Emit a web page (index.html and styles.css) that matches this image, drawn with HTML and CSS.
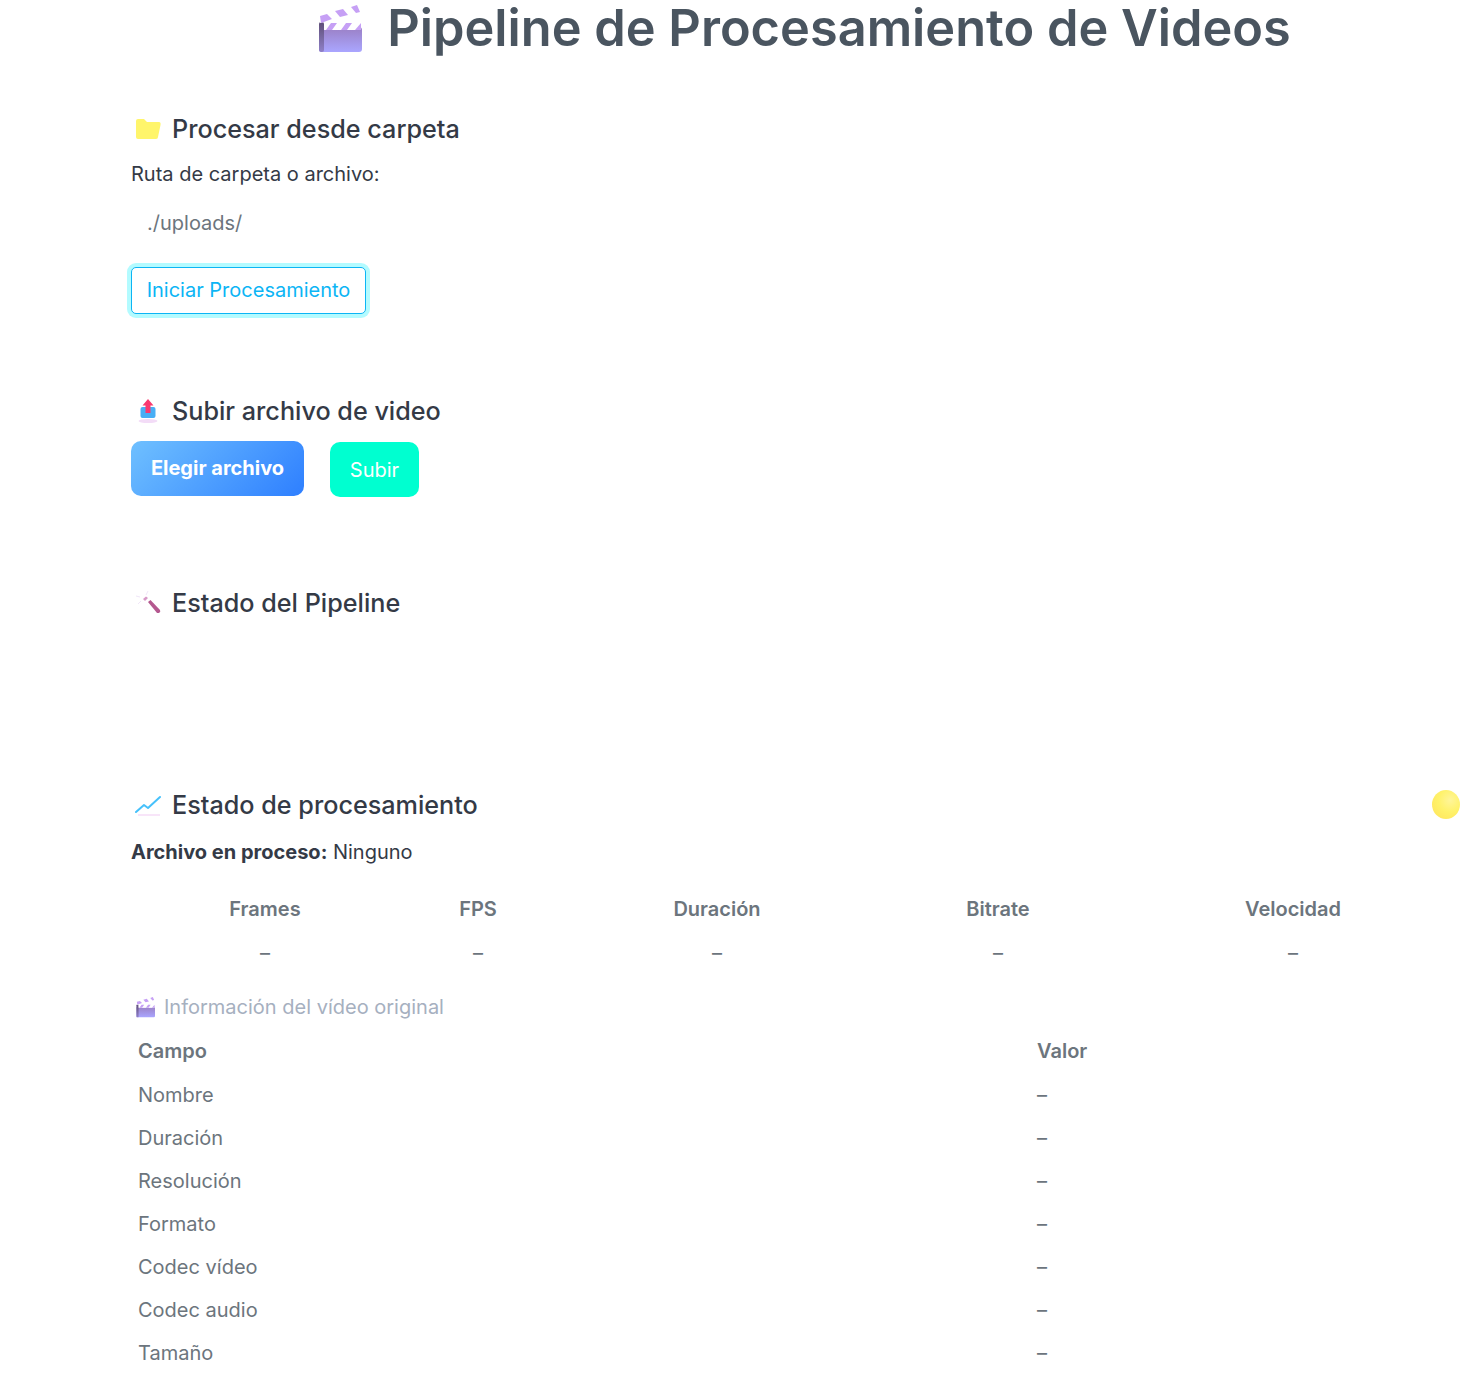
FILE: index.html
```html
<!DOCTYPE html>
<html>

<head>
    <title>Pipeline de Procesamiento de Videos</title>
    <link rel="stylesheet" href="styles.css">
</head>

<body>
    <svg class="defs">
        <defs>
            <linearGradient id="clapBody" x1="0" y1="0" x2="0" y2="1">
                <stop offset="0" stop-color="#9a7fc4" />
                <stop offset="1" stop-color="#aaa6ff" />
            </linearGradient>
            <linearGradient id="clapEdge" x1="0" y1="0" x2="0" y2="1">
                <stop offset="0" stop-color="#5f4f78" />
                <stop offset="1" stop-color="#8f80c8" />
            </linearGradient>
            <symbol id="clapper" viewBox="0 0 44 50">
                <rect x="1" y="24" width="43" height="25" rx="3" fill="url(#clapBody)" />
                <rect x="1" y="19" width="5" height="30" rx="2" fill="url(#clapEdge)" />
                <path d="M1 13 L39 2 L42 9 L2 20 Z" fill="#fff" />
                <path d="M2 13 L9 11 L14 16 L3 20 Z M17 8 L25 6 L30 12 L22 14 Z M33 4 L39 2 L42 9 L38 10 Z" fill="#c6a0f5" />
                <path d="M6 20 L43 20 L43 27 L6 27 Z" fill="#fff" />
                <path d="M13 20 L19 20 L14 27 L8 27 Z M28 20 L34 20 L29 27 L23 27 Z M43 20 L43 27 L37 27 Z" fill="#c6a0f5" />
            </symbol>
        </defs>
    </svg>

    <div class="page">
        <h1 class="title">
            <svg class="title-icon"><use href="#clapper" /></svg>
            <span class="title-text">Pipeline de Procesamiento de Videos</span>
        </h1>

        <section class="folder-section">
            <h2 class="heading">
                <svg class="heading-icon" viewBox="0 0 26 24">
                    <path d="M1 4 Q1 2 3 2 L9 2 L12 5 L24 5 Q26 5 25.500 8 L23 20 Q23 22 21 22 L3 22 Q1 22 1 20 Z" fill="#fff56b" />
                </svg>
                Procesar desde carpeta
            </h2>
            <p class="field-label">Ruta de carpeta o archivo:</p>
            <div class="path-input">./uploads/</div>
            <button class="start-btn">Iniciar Procesamiento</button>
        </section>

        <section class="upload-section">
            <h2 class="heading">
                <svg class="heading-icon" viewBox="0 0 26 24">
                    <ellipse cx="13" cy="22" rx="9.500" ry="2" fill="#f3dcf7" />
                    <rect x="5.500" y="8" width="15" height="11" rx="2" fill="#48aef5" />
                    <path d="M13 0 L18.500 6.500 L15.500 6.500 L15.500 14 L10.500 14 L10.500 6.500 L7.500 6.500 Z" fill="#f9396f" />
                </svg>
                Subir archivo de video
            </h2>
            <div class="upload-row">
                <button class="choose-btn">Elegir archivo</button>
                <button class="upload-btn">Subir</button>
            </div>
        </section>

        <section class="status-section">
            <h2 class="heading">
                <svg class="heading-icon" viewBox="0 0 26 24">
                    <path d="M13 11 L15.500 9 L25 19 Q26 21 24 22 L22 22 Z" fill="#b4588f" />
                    <path d="M8 8 L11 5.500 L13 7 L10 10 Z" fill="#d79ac8" />
                    <path d="M1 5 L5 6 M13 0 L11 4 M3 13 L6 10" stroke="#f0e6f8" stroke-width="1" />
                </svg>
                Estado del Pipeline
            </h2>
        </section>

        <section class="process-section">
            <h2 class="heading">
                <svg class="heading-icon" viewBox="0 0 26 24">
                    <path d="M3 22 L25 22" stroke="#f6dcf7" stroke-width="1.500" />
                    <path d="M1 19 L9 12 L13 15 L25 4" fill="none" stroke="#46c1fb" stroke-width="2" stroke-linecap="round" stroke-linejoin="round" />
                </svg>
                Estado de procesamiento
            </h2>
            <p class="current-file"><strong>Archivo en proceso:</strong> Ninguno</p>

            <table class="metrics">
                <tr>
                    <th class="col-frames">Frames</th>
                    <th class="col-fps">FPS</th>
                    <th class="col-duration">Duración</th>
                    <th class="col-bitrate">Bitrate</th>
                    <th class="col-speed">Velocidad</th>
                </tr>
                <tr>
                    <td>–</td>
                    <td>–</td>
                    <td>–</td>
                    <td>–</td>
                    <td>–</td>
                </tr>
            </table>

            <h3 class="info-heading">
                <svg class="info-icon"><use href="#clapper" /></svg>
                Información del vídeo original
            </h3>

            <table class="info">
                <tr>
                    <th class="col-field">Campo</th>
                    <th>Valor</th>
                </tr>
                <tr><td>Nombre</td><td>–</td></tr>
                <tr><td>Duración</td><td>–</td></tr>
                <tr><td>Resolución</td><td>–</td></tr>
                <tr><td>Formato</td><td>–</td></tr>
                <tr><td>Codec vídeo</td><td>–</td></tr>
                <tr><td>Codec audio</td><td>–</td></tr>
                <tr><td>Tamaño</td><td>–</td></tr>
            </table>
        </section>
    </div>

    <div class="ball"></div>
</body>

</html>
```

FILE: styles.css
```css
html,
body {
    margin: 0;
    padding: 0;
    background: #fff;
}

body {
    font-family: "Inter", "Liberation Sans", sans-serif;
    color: #343a46;
    overflow-x: hidden;
}

.defs {
    position: absolute;
    width: 0;
    height: 0;
}

.page {
    width: 1336px;
    margin-left: 131px;
}

.title {
    display: flex;
    justify-content: center;
    align-items: center;
    gap: 25px;
    height: 56px;
    margin: 0;
    font-size: 50.5px;
    line-height: 52px;
    font-weight: 600;
    color: #4a5560;
    padding-left: 11px;
}

.title-icon {
    width: 44px;
    height: 50px;
}

.heading {
    display: flex;
    align-items: center;
    gap: 11px;
    height: 32px;
    margin: 0;
    font-size: 25.2px;
    font-weight: 500;
    color: #343a46;
}

.heading-icon {
    width: 26px;
    height: 24px;
    margin-left: 4px;
}

.folder-section {
    padding-top: 57px;
}

.field-label {
    margin: 17px 0 0;
    font-size: 20px;
    line-height: 24px;
}

.path-input {
    margin-top: 25px;
    padding-left: 16px;
    font-size: 20px;
    line-height: 24px;
    color: #6c757d;
}

.start-btn {
    display: block;
    width: 235px;
    height: 47px;
    margin: 32px 0 0;
    padding: 0 0 2px;
    font-family: inherit;
    font-size: 20px;
    color: #0cb5f5;
    background: #fff;
    border: 1px solid #0cb5f5;
    border-radius: 5px;
    box-shadow: 0 0 0 4px #b3fbff;
}

.upload-section {
    padding-top: 81px;
}

.upload-row {
    display: flex;
    gap: 26px;
    margin-top: 14px;
}

.choose-btn {
    width: 173px;
    height: 55px;
    padding: 0 0 2px;
    font-family: inherit;
    font-size: 20px;
    font-weight: 700;
    color: #fff;
    background: linear-gradient(135deg, #6fc0ff, #2e7fff);
    border: 0;
    border-radius: 10px;
}

.upload-btn {
    width: 89px;
    height: 55px;
    margin-top: 1px;
    padding: 0;
    font-family: inherit;
    font-size: 20px;
    color: #fff;
    background: #00ffd0;
    border: 0;
    border-radius: 10px;
}

.status-section {
    padding-top: 90px;
}

.process-section {
    padding-top: 170px;
}

.current-file {
    margin: 19px 0 0;
    font-size: 20px;
    line-height: 24px;
}

.current-file strong {
    font-weight: 700;
}

.metrics {
    width: 1336px;
    margin-top: 23px;
    border-collapse: collapse;
    table-layout: fixed;
    font-size: 20px;
    color: #6c757d;
    text-align: center;
}

.metrics th {
    height: 44px;
    padding: 0;
    font-weight: 600;
}

.metrics td {
    height: 44px;
    padding: 0;
}

.col-frames {
    width: 268px;
}

.col-fps {
    width: 158px;
}

.col-duration {
    width: 320px;
}

.col-bitrate {
    width: 242px;
}

.info-heading {
    display: flex;
    align-items: center;
    gap: 8px;
    height: 32px;
    margin: 16px 0 0;
    font-size: 20px;
    font-weight: 400;
    color: #a6b0bf;
}

.info-icon {
    width: 19px;
    height: 22px;
    margin-left: 5px;
    margin-right: 1px;
}

.info {
    width: 1336px;
    margin-top: 5px;
    border-collapse: collapse;
    table-layout: fixed;
    font-size: 20px;
    color: #6c757d;
    text-align: left;
}

.info th {
    height: 45px;
    padding: 0 7px;
    font-weight: 600;
}

.info td {
    height: 43px;
    padding: 0 7px;
}

.col-field {
    width: 885px;
}

.ball {
    position: absolute;
    left: 1432px;
    top: 790px;
    width: 28px;
    height: 29px;
    border-radius: 50%;
    background: radial-gradient(circle at 65% 35%, #fff59a 0, #fff26a 45%, #ffe860 80%, #ffc98a 100%);
}
```
